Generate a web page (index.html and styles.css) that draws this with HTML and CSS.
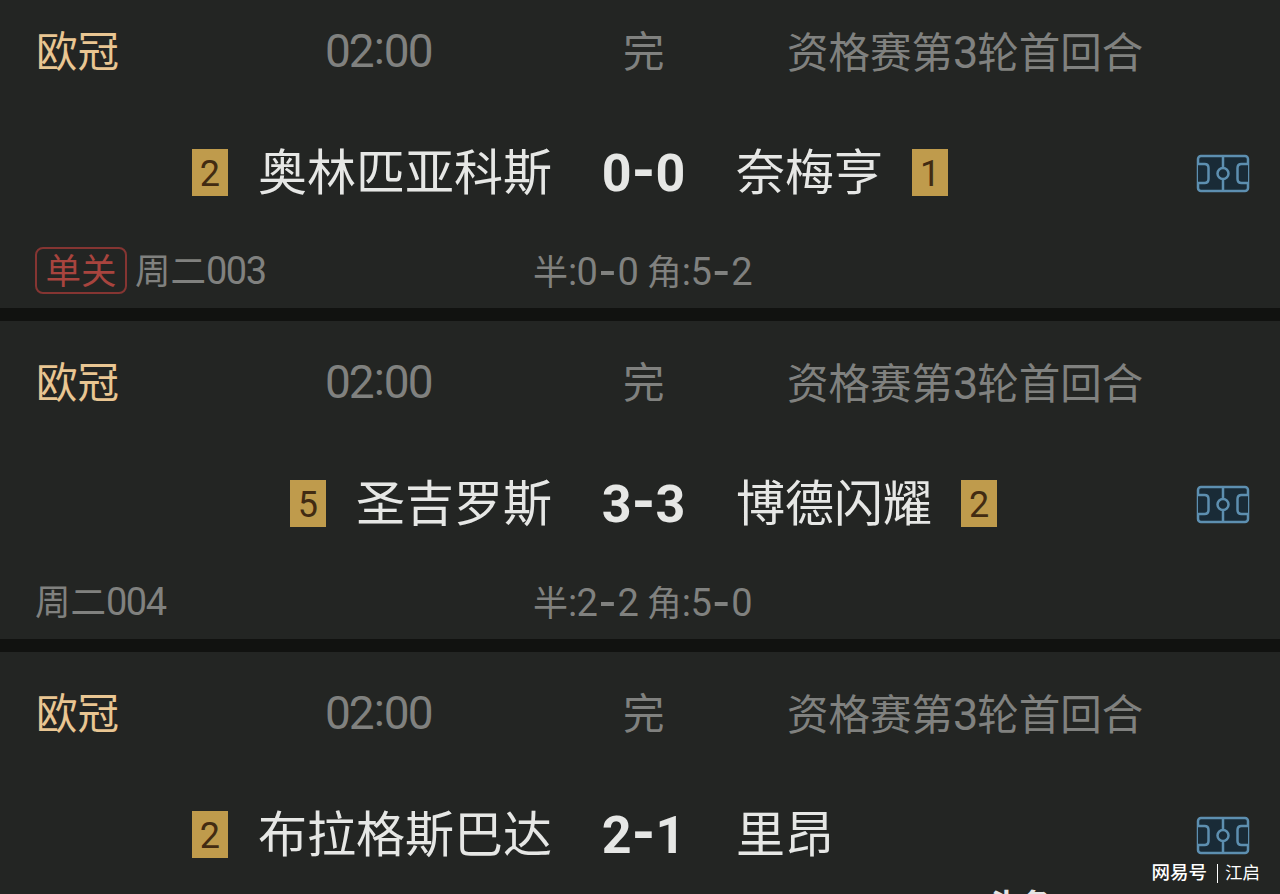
FILE: index.html
```
<!DOCTYPE html>
<html lang="zh-CN">
<head>
    <meta charset="UTF-8">
    <meta name="viewport" content="width=device-width, initial-scale=1.0">
    <title>欧冠赛果</title>
    <link rel="stylesheet" href="styles.css">
</head>
<body>
    <!-- 球场图标 -->
    <svg class="defs" width="0" height="0">
        <symbol id="pitch" viewBox="0 0 54 40">
            <rect x="2" y="2" width="50" height="35" rx="3"/>
            <path d="M27 2v12M27 25v12M2 10h6.500q4 0 4 4v11q0 4-4 4H2M52 10h-6.500q-4 0-4 4v11q0 4 4 4H52"/>
            <circle cx="27" cy="19.500" r="5.500"/>
        </symbol>
    </svg>

    <div class="match-list">
        <div class="match">
            <div class="info">
                <span class="league">欧冠</span>
                <span class="time">02<b>:</b>00</span>
                <span class="status">完</span>
                <span class="round">资格赛第<span class="num">3</span>轮首回合</span>
            </div>
            <div class="teams">
                <div class="home"><span class="rank">2</span><span class="name">奥林匹亚科斯</span></div>
                <div class="score">0<i>-</i>0</div>
                <div class="away"><span class="name">奈梅亨</span><span class="rank">1</span></div>
                <svg class="pitch"><use href="#pitch"/></svg>
            </div>
            <div class="extra">
                <div class="code"><span class="tag">单关</span>周二<span class="num">003</span></div>
                <div class="detail">半<span class="num">:0<i>-</i>0</span> 角<span class="num">:5<i>-</i>2</span></div>
            </div>
        </div>

        <div class="match">
            <div class="info">
                <span class="league">欧冠</span>
                <span class="time">02<b>:</b>00</span>
                <span class="status">完</span>
                <span class="round">资格赛第<span class="num">3</span>轮首回合</span>
            </div>
            <div class="teams">
                <div class="home"><span class="rank">5</span><span class="name">圣吉罗斯</span></div>
                <div class="score">3<i>-</i>3</div>
                <div class="away"><span class="name">博德闪耀</span><span class="rank">2</span></div>
                <svg class="pitch"><use href="#pitch"/></svg>
            </div>
            <div class="extra">
                <div class="code">周二<span class="num">004</span></div>
                <div class="detail">半<span class="num">:2<i>-</i>2</span> 角<span class="num">:5<i>-</i>0</span></div>
            </div>
        </div>

        <div class="match">
            <div class="info">
                <span class="league">欧冠</span>
                <span class="time">02<b>:</b>00</span>
                <span class="status">完</span>
                <span class="round">资格赛第<span class="num">3</span>轮首回合</span>
            </div>
            <div class="teams">
                <div class="home"><span class="rank">2</span><span class="name">布拉格斯巴达</span></div>
                <div class="score">2<i>-</i>1</div>
                <div class="away"><span class="name">里昂</span></div>
                <svg class="pitch"><use href="#pitch"/></svg>
            </div>
        </div>

        <div class="source">头条</div>
        <div class="watermark"><b>网易号</b><span>江启</span></div>
    </div>
</body>
</html>
```
FILE: styles.css
```
* {
    box-sizing: border-box;
}
body {
    margin: 0;
    background-color: #111210;
    font-family: Roboto, "Noto Sans CJK SC", sans-serif;
    color: #80817f;
}
i {
    display: inline-block;
    font-style: normal;
    letter-spacing: 0;
    line-height: 0;
    text-align: center;
}
.defs {
    display: block;
}
.match-list {
    position: relative;
    height: 894px;
    overflow: hidden;
    display: flex;
    flex-direction: column;
    gap: 13px;
}
.match {
    flex: none;
    height: 318px;
    padding-top: 32px;
    background-color: #232523;
}
.match:first-child {
    margin-top: -10px;
}
.info {
    display: grid;
    grid-template-columns: 289px 298px 164px 1fr;
    height: 60px;
    padding-left: 36px;
    font-size: 41.500px;
    line-height: 61px;
    white-space: nowrap;
}
.round .num {
    font-size: 45px;
    letter-spacing: -1px;
}
.league {
    color: #e9c692;
}
.time {
    font-size: 46px;
    line-height: 58px;
    letter-spacing: -2px;
}
.time b {
    padding: 0 1px;
    font-weight: 400;
    vertical-align: 3px;
    line-height: 1;
}
.teams {
    display: grid;
    grid-template-columns: 552px 184px 461px 54px;
    align-items: center;
    height: 70px;
    margin-top: 56px;
    line-height: 72px;
    white-space: nowrap;
}
.home,
.away {
    display: flex;
    align-items: center;
}
.home {
    justify-content: flex-end;
    gap: 30px;
}
.away {
    gap: 29px;
}
.name {
    font-size: 49px;
    color: #e6e7e5;
}
.rank {
    width: 36px;
    height: 47px;
    margin-top: -4px;
    background-color: #bf9b4c;
    color: #422b12;
    font-size: 36px;
    line-height: 50px;
    text-align: center;
}
.score {
    padding-right: 1px;
    color: #e6e7e5;
    font-size: 52px;
    font-weight: 700;
    text-align: center;
}
.score i {
    width: 24px;
    font-size: 60px;
}
.pitch {
    width: 54px;
    height: 40px;
    margin-left: -1px;
    fill: #192b37;
    stroke: #5d8fb0;
    stroke-width: 2.500;
}
.extra {
    display: grid;
    grid-template-columns: 498px 1fr;
    height: 50px;
    margin-top: 38px;
    padding-left: 35px;
    font-size: 35.500px;
    line-height: 52px;
    white-space: nowrap;
}
.code {
    display: flex;
}
.code .num {
    font-size: 38px;
    line-height: 51px;
    letter-spacing: -1.500px;
}
.tag {
    width: 92px;
    height: 47px;
    margin: 1px 8px 0 0;
    border: 2px solid #853532;
    border-radius: 8px;
    color: #a8443e;
    line-height: 46px;
    text-align: center;
}
.detail {
    font-size: 35px;
}
.detail .num {
    font-size: 38px;
    letter-spacing: -0.600px;
}
.detail i {
    width: 20px;
    font-size: 54px;
    vertical-align: -4px;
}
.source {
    position: absolute;
    left: 988px;
    top: 890px;
    color: #e4e4e4;
    font-size: 32px;
    font-weight: 700;
    line-height: 32px;
}
.watermark {
    position: absolute;
    right: 20px;
    bottom: 9px;
    display: flex;
    align-items: center;
    height: 24px;
    color: #fff;
    font-size: 17.500px;
    line-height: 24px;
}
.watermark b {
    font-size: 18.500px;
    font-weight: 500;
}
.watermark span {
    margin-left: 10px;
    padding-left: 7px;
    border-left: 1px solid #fff;
    line-height: 19px;
}
```
